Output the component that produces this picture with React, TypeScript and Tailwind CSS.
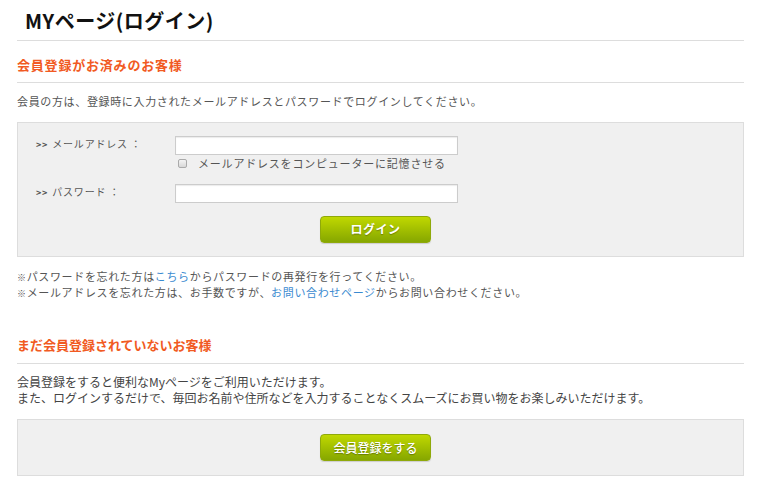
import React from 'react';

const FONT = "font-['Noto_Sans_CJK_JP','Noto_Sans',sans-serif]";

const GreenButton = ({ label, bold = true }: { label: string; bold?: boolean }) => (
  <button
    type="button"
    className={`w-[111px] h-[27px] rounded-[4px] bg-gradient-to-b from-[#c0d800] to-[#86a700] border border-[#8fa90a] text-white text-[12px] ${bold ? 'font-bold tracking-[0.5px]' : 'font-medium'} [text-shadow:0_1px_1px_rgba(0,0,0,0.3)] shadow-[0_1px_1px_rgba(0,0,0,0.15)]`}
  >
    {label}
  </button>
);

const Mark = () => <span className="text-[9px] leading-none">※</span>;
const Chevron = () => <span className="text-[9px] leading-none font-bold mr-[4px]">&gt;&gt;</span>;

export default function App() {
  return (
    <div className={`w-[761px] h-[497px] overflow-hidden bg-white px-[17px] text-[#555] ${FONT}`}>
      {/* Title */}
      <div className="h-[41px] border-b border-[#ddd] pt-[7px] pl-[8px]">
        <h1 className="text-[20px] leading-[28px] font-bold tracking-[0.5px] text-[#111]">MYページ(ログイン)</h1>
      </div>

      {/* Registered members */}
      <h2 className="pt-[16px] pb-[9px] leading-[16px] text-[13px] font-bold tracking-[0.8px] text-[#f15a22] border-b border-[#ddd]">
        会員登録がお済みのお客様
      </h2>
      <p className="mt-[10px] text-[11px] leading-[16px] tracking-[0.65px]">
        会員の方は、登録時に入力されたメールアドレスとパスワードでログインしてください。
      </p>

      <div className="mt-[13px] bg-[#f0f0f0] border border-[#ddd] pl-[18px] pt-[13px] pb-[13px]">
        <div className="flex items-start">
          <label className="w-[139px] text-[10px] leading-[16px] tracking-[0.8px] text-[#555]">
            <Chevron />メールアドレス ：
          </label>
          <input className="w-[283px] h-[19px] bg-white border border-[#ccc] shadow-[inset_0_1px_1px_rgba(0,0,0,0.08)]" />
        </div>
        <div className="ml-[142px] mt-[1px] h-[14px] flex items-center gap-[11px]">
          <span className="w-[9px] h-[9px] rounded-[2px] border border-[#aaa] bg-gradient-to-b from-[#f4f4f4] to-[#d8d8d8]" />
          <span className="text-[11px] leading-[14px] tracking-[0.8px] text-[#555]">メールアドレスをコンピューターに記憶させる</span>
        </div>
        <div className="flex items-start mt-[14px]">
          <label className="w-[139px] text-[10px] leading-[16px] tracking-[0.8px] text-[#555]">
            <Chevron />パスワード ：
          </label>
          <input type="password" className="w-[283px] h-[19px] bg-white border border-[#ccc] shadow-[inset_0_1px_1px_rgba(0,0,0,0.08)]" />
        </div>
        <div className="mt-[12px] ml-[284px]">
          <GreenButton label="ログイン" />
        </div>
      </div>

      <div className="mt-[11px] text-[11px] leading-[16px] tracking-[0.65px]">
        <p>
          <Mark />パスワードを忘れた方は<span className="text-[#3b8ad0]">こちら</span>からパスワードの再発行を行ってください。
        </p>
        <p>
          <Mark />メールアドレスを忘れた方は、お手数ですが、<span className="text-[#3b8ad0]">お問い合わせページ</span>からお問い合わせください。
        </p>
      </div>

      {/* Not yet registered */}
      <h2 className="mt-[37px] pb-[10px] leading-[16px] text-[13px] font-bold text-[#f15a22] border-b border-[#ddd]">
        まだ会員登録されていないお客様
      </h2>
      <div className="mt-[10px] text-[12px] leading-[16px] text-[#444]">
        <p>会員登録をすると便利なMyページをご利用いただけます。</p>
        <p>また、ログインするだけで、毎回お名前や住所などを入力することなくスムーズにお買い物をお楽しみいただけます。</p>
      </div>

      <div className="mt-[13px] bg-[#f0f0f0] border border-[#ddd] pl-[302px] pt-[14px] pb-[14px]">
        <GreenButton label="会員登録をする" bold={false} />
      </div>
    </div>
  );
}
